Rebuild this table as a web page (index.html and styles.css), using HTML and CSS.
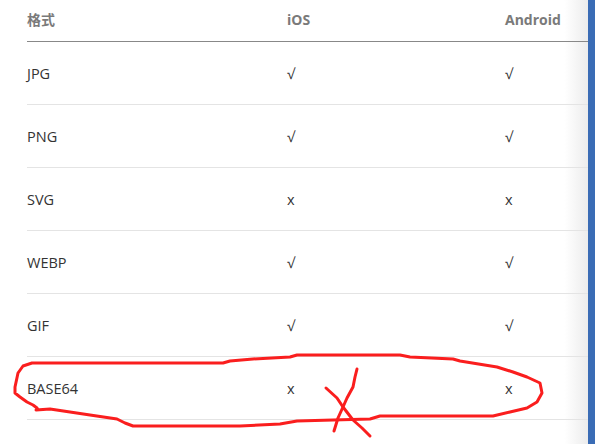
FILE: index.html
```html
<!DOCTYPE html>
<html lang="zh-CN">
<head>
    <meta charset="UTF-8">
    <meta name="viewport" content="width=device-width, initial-scale=1.0">
    <title>图片格式支持</title>
    <link rel="stylesheet" href="styles.css">
</head>
<body>
    <div class="page">
        <div class="content">
            <table class="format-table">
                <thead>
                    <tr>
                        <th class="col-format">格式</th>
                        <th class="col-ios">iOS</th>
                        <th class="col-android">Android</th>
                    </tr>
                </thead>
                <tbody>
                    <tr><td>JPG</td><td>√</td><td>√</td></tr>
                    <tr><td>PNG</td><td>√</td><td>√</td></tr>
                    <tr><td>SVG</td><td>x</td><td>x</td></tr>
                    <tr><td>WEBP</td><td>√</td><td>√</td></tr>
                    <tr><td>GIF</td><td>√</td><td>√</td></tr>
                    <tr><td>BASE64</td><td>x</td><td>x</td></tr>
                </tbody>
            </table>
        </div>
        <div class="sidebar"></div>

        <!-- hand-drawn annotation -->
        <svg class="scribble" width="595" height="444" viewBox="0 0 595 444">
            <path d="M36 410 L50 409 L90 415 L117 419 L125 423 L133 426 L240 426 L280 424 L297 421 L333 420 L370 419 L380 416 L493 416 L510 412 L527 408 L537 402 L542 393 L540 383 L527 377 L513 372 L497 367 L460 361 L453 359 L410 357 L400 355 L297 355 L290 357 L253 359 L230 361 L223 363 L32 363 L23 366 L18 373 L15 387 L15 393 L20 397 L27 402 L33 405 L37 408" />
            <path d="M326 388 L337 398 L343 407 L353 420 L362 428 L370 436" />
            <path d="M357 369 L355 377 L353 387 L347 398 L343 407 L338 418 L334 431" />
        </svg>
    </div>
</body>
</html>
```

FILE: styles.css
```css
body {
    margin: 0;
    background: #fff;
    font-family: "Open Sans", "Noto Sans CJK SC", sans-serif;
    overflow: hidden;
}
.page {
    position: relative;
    display: flex;
    width: 595px;
    height: 444px;
}
.content {
    flex: 1;
    padding-left: 27px;
    background: linear-gradient(to right, #fff 0, #fff 96%, #ececec 100%);
}
.sidebar {
    width: 7px;
    background-color: #3a6cb5;
}
.format-table {
    width: 100%;
    border-collapse: collapse;
    font-size: 14.5px;
}
.format-table th {
    height: 38px;
    padding: 0 0 3px;
    text-align: left;
    font-size: 14px;
    font-weight: bold;
    color: #7a7a7a;
    border-bottom: 1px solid #888;
}
.col-format {
    width: 260px;
}
.col-ios {
    width: 218px;
}
.format-table td {
    height: 62px;
    padding: 0;
    color: #333;
    border-bottom: 1px solid #e4e4e4;
}
.scribble {
    position: absolute;
    left: 0;
    top: 0;
    pointer-events: none;
}
.scribble path {
    fill: none;
    stroke: #fa1e1e;
    stroke-width: 3;
    stroke-linejoin: round;
    stroke-linecap: round;
}
```
